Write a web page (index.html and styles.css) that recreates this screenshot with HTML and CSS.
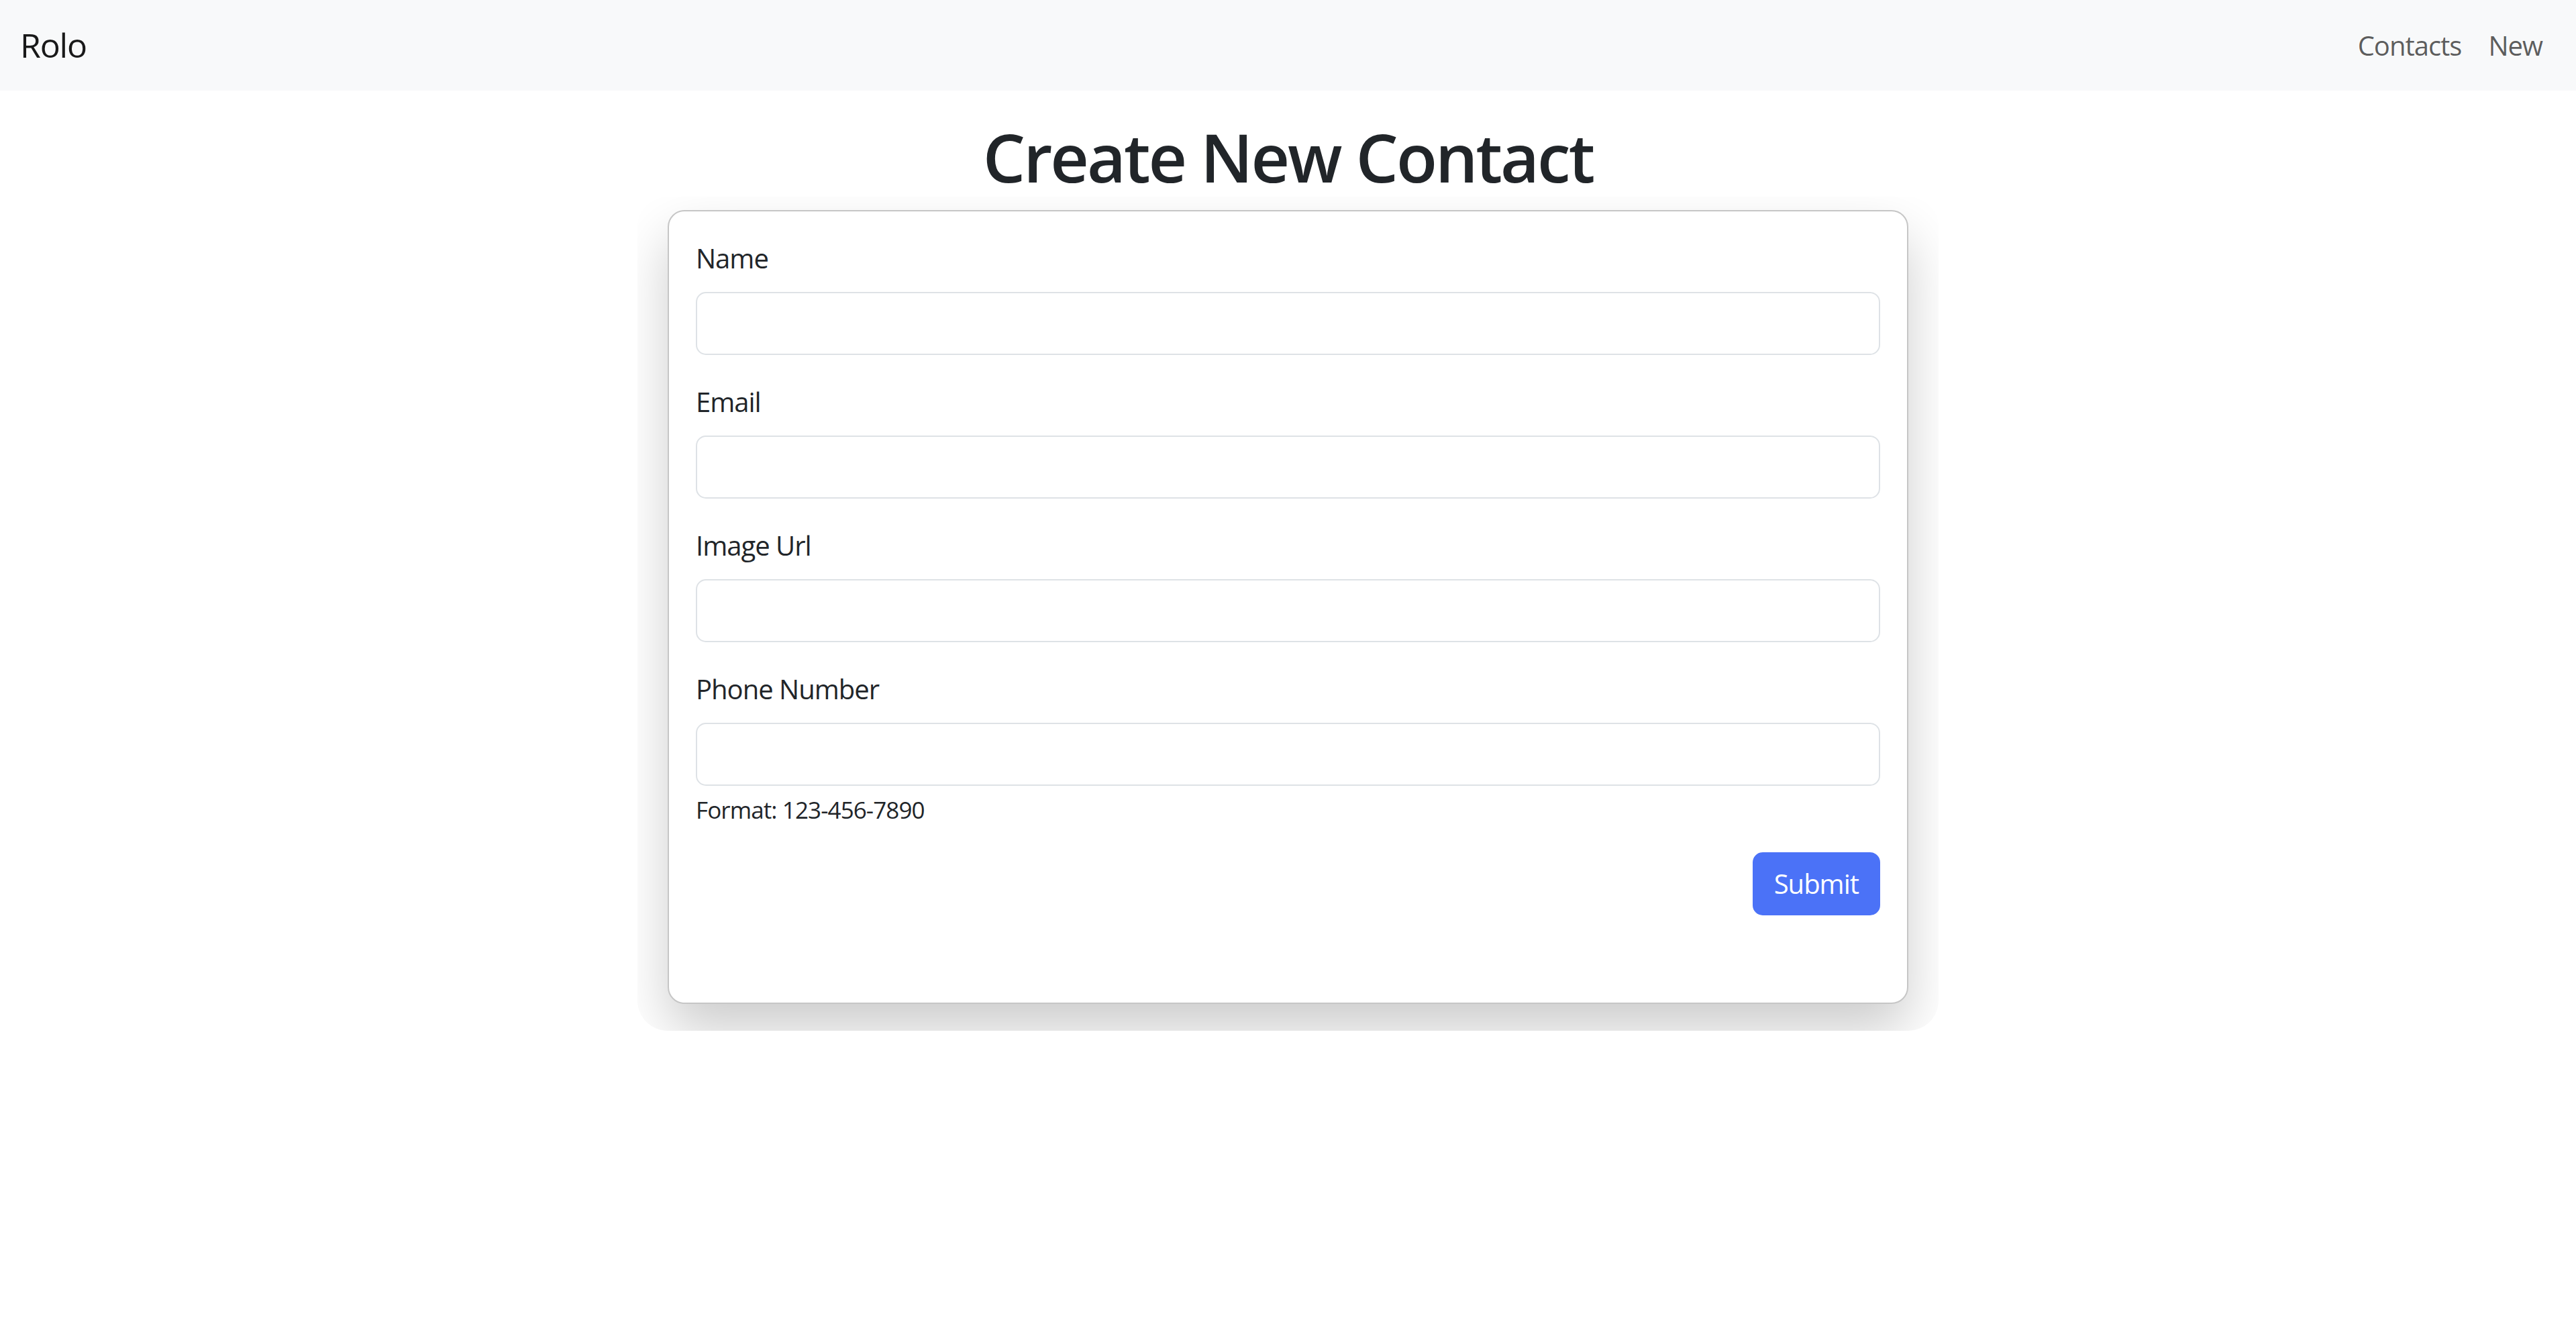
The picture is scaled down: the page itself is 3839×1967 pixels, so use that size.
FILE: index.html
```html
<!DOCTYPE html>
<html lang="en">
<head>
<meta charset="utf-8">
<title>Rolo</title>
<link rel="stylesheet" href="styles.css">
</head>
<body>
<nav class="navbar">
  <a class="brand" href="#">Rolo</a>
  <ul class="nav">
    <li><a class="nav-link" href="#">Contacts</a></li>
    <li><a class="nav-link" href="#">New</a></li>
  </ul>
</nav>
<main class="main">
  <h1 class="title">Create New Contact</h1>
  <div class="card-clip">
    <div class="card">
      <form class="form">
        <div class="group">
          <label class="label" for="name">Name</label>
          <input class="control" id="name" type="text">
        </div>
        <div class="group">
          <label class="label" for="email">Email</label>
          <input class="control" id="email" type="email">
        </div>
        <div class="group">
          <label class="label" for="image">Image Url</label>
          <input class="control" id="image" type="text">
        </div>
        <div class="group group-last">
          <label class="label" for="phone">Phone Number</label>
          <input class="control" id="phone" type="tel">
          <div class="hint">Format: 123-456-7890</div>
        </div>
        <div class="actions">
          <button class="btn" type="submit">Submit</button>
        </div>
      </form>
    </div>
  </div>
</main>
</body>
</html>
```
FILE: styles.css
```css
* { box-sizing: border-box; }
html, body { margin: 0; padding: 0; background: #fff; }
body {
  font-family: "Open Sans", "Noto Sans", sans-serif;
  font-size: 40px;
  line-height: 1.5;
  letter-spacing: -1px;
  color: #212529;
}
.navbar {
  height: 135px;
  background: #f8f9fa;
  display: flex;
  align-items: center;
  justify-content: space-between;
  padding: 0 30px;
}
.brand {
  font-size: 50px;
  line-height: 75px;
  letter-spacing: -1.2px;
  color: rgba(0, 0, 0, 0.9);
  text-decoration: none;
}
.nav {
  list-style: none;
  margin: 0;
  padding: 0;
  display: flex;
}
.nav-link {
  display: block;
  padding: 20px 20px;
  font-size: 40px;
  line-height: 60px;
  color: rgba(0, 0, 0, 0.65);
  text-decoration: none;
}
.main {
  display: flex;
  flex-direction: column;
  align-items: center;
  padding-top: 38px;
}
.title {
  margin: 0;
  font-size: 100px;
  line-height: 120px;
  font-weight: 600;
  letter-spacing: -3px;
  color: #212529;
  text-align: center;
}
.card-clip {
  overflow: hidden;
  padding: 20px 45px 40px;
  border-radius: 45px;
}
.card {
  width: 1849px;
  background: #fff;
  border: 2px solid #c6c6c6;
  border-radius: 25px;
  padding: 40px;
  box-shadow: 0 40px 80px rgba(0, 0, 0, 0.2);
}
.form { margin: 0; }
.group { margin-bottom: 40px; }
.group-last { margin-bottom: 37px; }
.label {
  display: block;
  margin-bottom: 20px;
  line-height: 60px;
}
.control {
  display: block;
  width: 100%;
  height: 94px;
  padding: 15px 30px;
  font: inherit;
  line-height: 60px;
  border: 2px solid #dee2e6;
  border-radius: 15px;
  background: #fff;
  color: #212529;
  outline: none;
}
.hint {
  margin-top: 10px;
  font-size: 35px;
  line-height: 52px;
  letter-spacing: -0.9px;
  color: #212529;
}
.actions {
  display: flex;
  justify-content: flex-end;
  margin-bottom: 90px;
}
.btn {
  font: inherit;
  letter-spacing: -1px;
  line-height: 60px;
  padding: 15px 30px;
  border: 2px solid #4b72f7;
  border-radius: 15px;
  background: #4b72f7;
  color: #fff;
  cursor: pointer;
}
```
